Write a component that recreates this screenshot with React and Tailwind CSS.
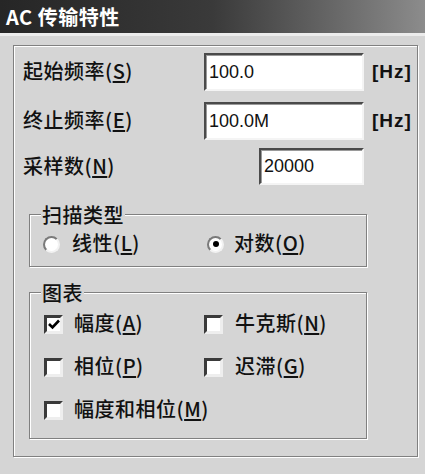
import React from 'react'

const Label = ({ text, k }) => (
  <span className="text-[20px] leading-none font-medium tracking-[0.5px] text-[#111]">
    {text}(<span className="underline underline-offset-2">{k}</span>)
  </span>
)

const Field = ({ value, w }) => (
  <div
    className={`${w} h-full bg-white border-2 border-t-[#4a4a4a] border-l-[#4a4a4a] border-b-[#f4f4f4] border-r-[#f4f4f4] shadow-[inset_1px_1px_0_#9a9a9a] flex items-center pl-[3px] font-['Liberation_Sans',sans-serif] text-[18px] text-[#111]`}
  >
    {value}
  </div>
)

const Radio = ({ checked }) => (
  <div className="w-[17px] h-[17px] rounded-full bg-white border-2 border-t-[#7a7a7a] border-l-[#7a7a7a] border-b-[#f2f2f2] border-r-[#f2f2f2] flex items-center justify-center">
    {checked && <div className="w-[6px] h-[6px] rounded-full bg-black" />}
  </div>
)

const Check = ({ checked }) => (
  <div className="w-[19px] h-[19px] bg-white border-[3px] border-t-[#3a3a3a] border-l-[#3a3a3a] border-b-[#eeeeee] border-r-[#eeeeee] flex items-center justify-center">
    {checked && (
      <svg width="12" height="11" viewBox="0 0 12 11">
        <path d="M1 5 L4.5 8.5 L11 1.5" fill="none" stroke="#000" strokeWidth="2.6" />
      </svg>
    )}
  </div>
)

const Group = ({ title, className, children }) => (
  <div className={`relative w-[338px] border border-[#808080] shadow-[inset_1px_1px_0_#fff,1px_1px_0_#fff] ${className}`}>
    <span className="absolute left-[11px] top-[-11px] px-[1px] bg-[#d5d5d5] text-[20px] leading-[22px] font-medium tracking-[0.5px] text-[#111]">
      {title}
    </span>
    {children}
  </div>
)

const CheckItem = ({ checked, text, k, gap }) => (
  <div className="flex items-center h-[24px]">
    <Check checked={checked} />
    <div className={gap}>
      <Label text={text} k={k} />
    </div>
  </div>
)

export default function App() {
  return (
    <div className="w-[425px] h-[474px] bg-[#d5d5d5] overflow-hidden font-['Noto_Sans_CJK_SC',sans-serif]">
      {/* Title bar */}
      <div className="h-[33px] bg-linear-to-r from-[#262626] via-[#3a3a3a] to-[#8c8c8c] flex items-center pl-[6px] text-white font-bold text-[20px] leading-none tracking-[0.5px]">
        AC 传输特性
      </div>

      <div className="border-t-[3px] border-[#ececec] pt-[9px] pl-[13px]">
        <div className="w-[405px] h-[412px] border border-[#808080] shadow-[inset_1px_1px_0_#fff,1px_1px_0_#fff] pt-[7px] pl-[9px]">
          {/* Start frequency */}
          <div className="flex items-center h-[38px]">
            <div className="w-[181px]">
              <Label text="起始频率" k="S" />
            </div>
            <Field value="100.0" w="w-[160px]" />
            <span className="ml-[8px] font-['Liberation_Sans',sans-serif] text-[19px] font-bold tracking-[1px] text-[#111]">[Hz]</span>
          </div>

          {/* Stop frequency */}
          <div className="flex items-center h-[38px] mt-[11px]">
            <div className="w-[181px]">
              <Label text="终止频率" k="E" />
            </div>
            <Field value="100.0M" w="w-[160px]" />
            <span className="ml-[8px] font-['Liberation_Sans',sans-serif] text-[19px] font-bold tracking-[1px] text-[#111]">[Hz]</span>
          </div>

          {/* Samples */}
          <div className="flex items-center h-[37px] mt-[8px]">
            <div className="w-[236px]">
              <Label text="采样数" k="N" />
            </div>
            <Field value="20000" w="w-[105px]" />
          </div>

          {/* Sweep type */}
          <Group title="扫描类型" className="mt-[29px] ml-[6px] h-[53px]">
            <div className="flex items-center h-[24px] mt-[17px] pl-[13px]">
              <div className="flex items-center w-[164px]">
                <Radio />
                <div className="ml-[12px]">
                  <Label text="线性" k="L" />
                </div>
              </div>
              <div className="flex items-center">
                <Radio checked />
                <div className="ml-[10px]">
                  <Label text="对数" k="O" />
                </div>
              </div>
            </div>
          </Group>

          {/* Charts */}
          <Group title="图表" className="mt-[25px] ml-[6px] h-[147px]">
            <div className="pt-[19px] pl-[14px] flex flex-col gap-[19px]">
              <div className="flex">
                <div className="w-[160px]">
                  <CheckItem checked text="幅度" k="A" gap="ml-[11px]" />
                </div>
                <CheckItem text="牛克斯" k="N" gap="ml-[12px]" />
              </div>
              <div className="flex">
                <div className="w-[160px]">
                  <CheckItem text="相位" k="P" gap="ml-[11px]" />
                </div>
                <CheckItem text="迟滞" k="G" gap="ml-[12px]" />
              </div>
              <CheckItem text="幅度和相位" k="M" gap="ml-[11px]" />
            </div>
          </Group>
        </div>
      </div>
    </div>
  )
}
